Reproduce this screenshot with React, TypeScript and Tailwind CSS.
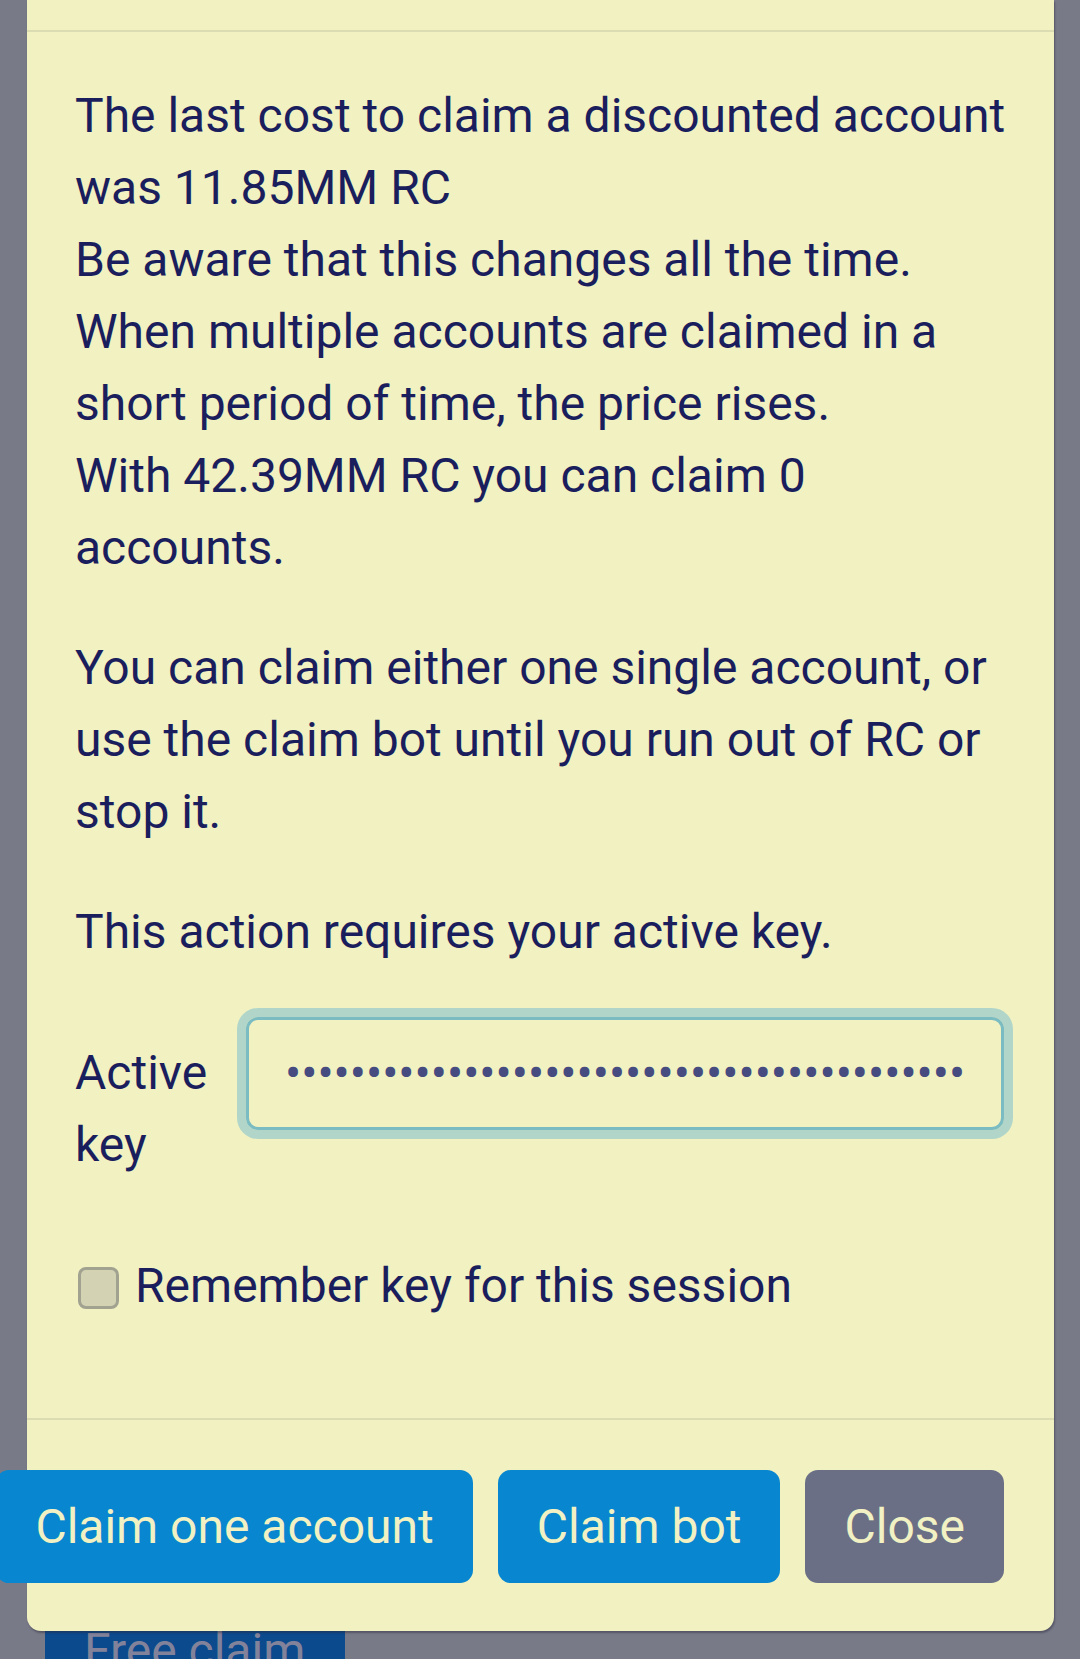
import React from 'react';

const font = { fontFamily: 'Roboto, "Noto Sans", sans-serif' };

function FooterButton({ label, tone }: { label: string; tone: 'blue' | 'gray' }) {
  return (
    <button
      className={
        'h-[113px] shrink-0 whitespace-nowrap rounded-[13px] px-[39px] text-[48px] leading-[72px] text-[#f1f1c3] ' +
        (tone === 'blue' ? 'bg-[#0886cf]' : 'bg-[#6b6f86]')
      }>
      {label}
    </button>
  );
}

export default function App() {
  return (
    <div className="relative h-[1659px] w-[1080px] overflow-hidden bg-[#797a88]" style={font}>
      {/* page underneath the backdrop */}
      <div className="pl-[45px] pt-[1594px]">
        <button className="h-[113px] w-[300px] bg-[#0c4a8e] pl-[39px] text-left text-[48px] leading-[72px] text-[#82839a]">
          Free claim
        </button>
      </div>

      {/* modal */}
      <div className="absolute inset-0">
        <div className="ml-[27px] w-[1027px] rounded-b-[14px] bg-[#f1f1c1] text-[48px] leading-[72px] text-[#1b1e5d] shadow-[1px_2px_2px_rgba(40,40,60,0.45)]">
          <div className="h-[32px] border-b-2 border-[#dcdcb3]" />

          <div className="pb-[48px] pl-[48px] pr-[40px] pt-[48px]">
            <p className="mb-[48px]">
              The last cost to claim a discounted account was 11.85MM RC
              <br />
              Be aware that this changes all the time.
              <br />
              When multiple accounts are claimed in a short period of time, the price rises.
              <br />
              With 42.39MM RC you can claim 0 accounts.
            </p>
            <p className="mb-[48px]">
              You can claim either one single account, or use the claim bot until you run out of RC or stop it.
            </p>
            <p className="mb-[48px]">This action requires your active key.</p>

            <div className="mb-[48px] flex w-[929px]">
              <label className="w-[171px] shrink-0 py-[21px]">Active key</label>
              <input
                type="password"
                readOnly
                defaultValue="abcdefghijklmnopqrstuvwxyzabcdefghijklmnopq"
                className="mt-[1px] h-[113px] min-w-0 flex-1 rounded-[12px] border-[3px] border-[#7bbcc3] bg-transparent px-[36px] text-[48px] text-[#464c7f] shadow-[0_0_0_9px_#b1d6c9] outline-none"
                style={font}
              />
            </div>

            <label className="mb-[48px] flex items-start">
              <span className="ml-[3px] mt-[17px] h-[42px] w-[41px] shrink-0 rounded-[8px] border-[3px] border-[#a2a290] bg-[#d3d3b4]" />
              <span className="ml-[16px]">Remember key for this session</span>
            </label>
          </div>

          <div className="flex justify-end gap-[25px] border-t-2 border-[#dcdcb3] pb-[48px] pr-[50px] pt-[50px]">
            <FooterButton label="Claim one account" tone="blue" />
            <FooterButton label="Claim bot" tone="blue" />
            <FooterButton label="Close" tone="gray" />
          </div>
        </div>
      </div>
    </div>
  );
}
